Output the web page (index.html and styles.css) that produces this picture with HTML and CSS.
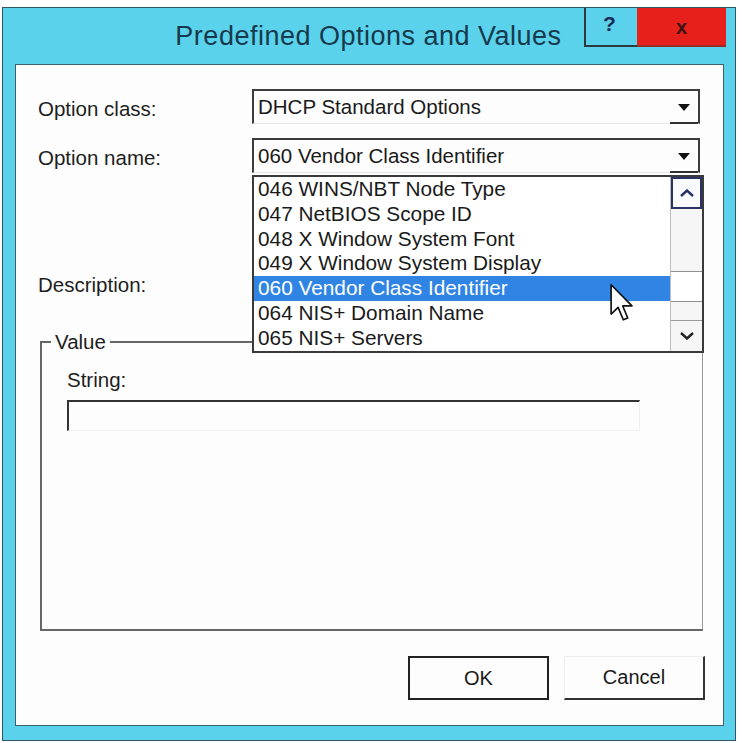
FILE: index.html
```html
<!DOCTYPE html>
<html>
<head>
<meta charset="utf-8">
<link rel="stylesheet" href="styles.css">
</head>
<body>
<div class="window">
  <div class="titlebar">
    <div class="title">Predefined Options and Values</div>
    <div class="caption-buttons">
      <div class="cbtn help">?</div>
      <div class="cbtn close">x</div>
    </div>
  </div>
  <div class="client">
    <div class="form">
      <div class="label">Option class:</div>
      <div class="combo">
        <div class="combo-text">DHCP Standard Options</div>
        <div class="combo-btn"><svg width="12" height="7" viewBox="0 0 12 7"><path d="M0 0 H12 L6 7 Z" fill="#111"/></svg></div>
      </div>
      <div class="label">Option name:</div>
      <div class="combo open">
        <div class="combo-text">060 Vendor Class Identifier</div>
        <div class="combo-btn"><svg width="12" height="7" viewBox="0 0 12 7"><path d="M0 0 H12 L6 7 Z" fill="#111"/></svg></div>
        <div class="droplist">
          <div class="items">
            <div class="item">046 WINS/NBT Node Type</div>
            <div class="item">047 NetBIOS Scope ID</div>
            <div class="item">048 X Window System Font</div>
            <div class="item">049 X Window System Display</div>
            <div class="item selected">060 Vendor Class Identifier</div>
            <div class="item">064 NIS+ Domain Name</div>
            <div class="item">065 NIS+ Servers</div>
          </div>
          <div class="scrollbar">
            <div class="sb-btn up"><svg width="14" height="8" viewBox="0 0 14 8"><polyline points="1,7 7,1.5 13,7" fill="none" stroke="#23306a" stroke-width="2.4"/></svg></div>
            <div class="sb-track">
              <div class="sb-thumb"></div>
            </div>
            <div class="sb-btn down"><svg width="14" height="8" viewBox="0 0 14 8"><polyline points="1,1 7,6.5 13,1" fill="none" stroke="#222" stroke-width="2.4"/></svg></div>
          </div>
          <svg class="cursor" width="24" height="40" viewBox="0 0 13 21"><path d="M0.6 0.6 L0.6 16.5 L4.4 12.9 L7.2 19.6 L9.6 18.6 L6.9 12.1 L11.9 12.1 Z" fill="#fff" stroke="#111" stroke-width="0.9" stroke-linejoin="round"/></svg>
        </div>
      </div>
      <div class="label desc">Description:</div>
      <div class="desc-text"></div>
    </div>
    <fieldset class="group">
      <legend>Value</legend>
      <div class="string-label">String:</div>
      <div class="edit"></div>
    </fieldset>
    <div class="buttons">
      <button class="btn default">OK</button>
      <button class="btn">Cancel</button>
    </div>
  </div>
</div>
</body>
</html>
```

FILE: styles.css
```css
* { box-sizing: border-box; }
html, body { margin: 0; padding: 0; background: #ffffff; }
body {
  font-family: "Liberation Sans", Arial, sans-serif;
  color: #222;
}
.window {
  margin: 7px 0 0 2px;
  width: 734px;
  height: 734px;
  background: #5ad2ec;
  border: 1px solid #2e5664;
  display: flex;
  flex-direction: column;
}
.titlebar {
  height: 56px;
  display: flex;
  align-items: flex-start;
}
.title {
  flex: 1;
  padding-left: 150px;
  text-align: center;
  font-size: 27px;
  letter-spacing: 0.5px;
  line-height: 30px;
  padding-top: 13px;
  color: #17394c;
}
.caption-buttons {
  display: flex;
  margin-right: 9px;
}
.cbtn {
  height: 39px;
  display: flex;
  align-items: center;
  justify-content: center;
  font-weight: bold;
}
.help {
  width: 53px;
  border-left: 2px solid #2f3a40;
  border-bottom: 2px solid #2f3a40;
  color: #1a2a58;
  font-size: 21px;
  padding-bottom: 6px;
  padding-right: 4px;
}
.close {
  width: 89px;
  background: #e8201b;
  border-bottom: 2px solid #9a2a22;
  color: #3a1410;
  font-size: 20px;
  padding-top: 2px;
}
.client {
  margin: 0 11px 0 12px;
  height: 662px;
  background: #fdfdfd;
  border: 1px solid #3d5f6b;
  padding: 24px 18px 0 22px;
  display: flex;
  flex-direction: column;
}
.form {
  display: grid;
  grid-template-columns: 214px 448px;
  row-gap: 14px;
  align-items: center;
}
.label {
  font-size: 20.5px;
  line-height: 24px;
  padding-top: 4px;
  color: #1e1e1e;
}
.combo {
  position: relative;
  height: 35px;
  border-top: 2px solid #3c3c3c;
  border-left: 2px solid #3c3c3c;
  border-right: 2px solid #3c3c3c;
  border-bottom: 1px solid #e6e6e6;
  display: flex;
  align-items: center;
}
.combo-text {
  flex: 1;
  font-size: 20.5px;
  padding-left: 4px;
  color: #1a1a1a;
  white-space: nowrap;
}
.combo-btn {
  width: 28px;
  height: 100%;
  display: flex;
  align-items: center;
  justify-content: center;
  border-bottom: 2px solid #333;
  margin-bottom: -1px;
  padding-top: 1px;
}
.droplist {
  position: absolute;
  top: 35px;
  left: -2px;
  width: 452px;
  height: 178px;
  background: #fff;
  border: 2px solid #3a3a3a;
  display: flex;
  z-index: 5;
}
.items {
  flex: 1;
}
.item {
  height: 24.8px;
  line-height: 24.8px;
  font-size: 20.8px;
  padding-left: 4px;
  color: #1a1a1a;
  white-space: nowrap;
}
.item.selected {
  background: #2f84e4;
  color: #fff;
}
.scrollbar {
  width: 32px;
  display: flex;
  flex-direction: column;
  border-left: 1px solid #bdbdbd;
  background: #f6f6f6;
}
.sb-btn {
  height: 32px;
  display: flex;
  align-items: center;
  justify-content: center;
}
.sb-btn.up {
  border: 2px solid #2b3266;
  background: #fafbff;
}
.sb-btn.down {
  border-top: 1px solid #9a9a9a;
  height: 31px;
}
.sb-track {
  flex: 1;
  padding-top: 62px;
}
.sb-thumb {
  height: 31px;
  background: #fff;
  border-top: 1px solid #8f8f8f;
  border-bottom: 1px solid #8f8f8f;
}
.cursor {
  position: absolute;
  left: 356px;
  top: 106px;
}
.desc {
  margin-top: 82px;
}
.desc-text {
  margin-top: 82px;
  height: 24px;
}
.group {
  margin: 34px 0 0 2px;
  padding: 16px 0 0 25px;
  width: 663px;
  height: 300px;
  border: 2px solid #666;
  border-right: 1px solid #9a9a9a;
  min-width: 0;
}
.group legend {
  font-size: 20.5px;
  line-height: 22px;
  padding: 0 4px;
  margin-left: -16px;
  color: #1e1e1e;
}
.string-label {
  font-size: 20.5px;
  line-height: 22px;
  color: #1e1e1e;
}
.edit {
  margin-top: 9px;
  width: 573px;
  height: 31px;
  border-top: 2px solid #333;
  border-left: 2px solid #333;
  border-right: 1px solid #f0f0f0;
  border-bottom: 1px solid #f0f0f0;
}
.buttons {
  display: flex;
  justify-content: flex-end;
  gap: 15px;
  margin-top: 25px;
}
.btn {
  width: 141px;
  height: 44px;
  font-family: "Liberation Sans", Arial, sans-serif;
  font-size: 20px;
  color: #1a1a1a;
  background: #fdfdfd;
  border: 0;
  border-right: 2px solid #333;
  border-bottom: 2px solid #333;
  border-top: 1px solid #eee;
  border-left: 1px solid #eee;
  padding: 0;
}
.btn.default {
  border: 2px solid #222;
}
```
